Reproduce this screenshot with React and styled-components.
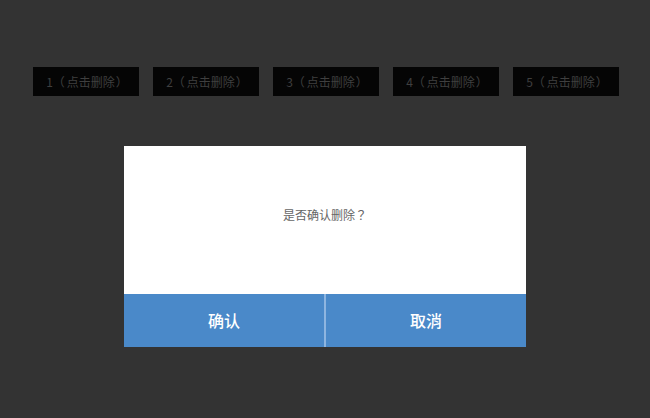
import React from "react";
import styled, { createGlobalStyle } from "styled-components";

const GlobalStyle = createGlobalStyle`
  html, body {
    margin: 0;
    padding: 0;
    background: #333333;
    font-family: "Noto Sans CJK TC", "Noto Sans CJK SC", "Noto Sans", sans-serif;
  }
  #root {
    width: 650px;
    height: 418px;
  }
`;

const Page = styled.div`
  width: 650px;
  height: 418px;
  background: #333333;
  display: flex;
  flex-direction: column;
  overflow: hidden;
`;

const Toolbar = styled.div`
  display: flex;
  gap: 14px;
  padding: 67px 0 0 33px;
`;

const ItemButton = styled.button`
  width: 106px;
  height: 29px;
  border: none;
  margin: 0;
  padding: 0 0 0 2px;
  background: #050505;
  color: #3f3f3f;
  font-family: inherit;
  font-size: 12px;
  line-height: 29px;
  text-align: center;
  cursor: pointer;
`;

const Paren = styled.span`
  margin: ${(p) => (p.$open ? "0 2px 0 0" : "0 0 0 1px")};
`;

const Dialog = styled.div`
  align-self: center;
  margin-top: 50px;
  width: 402px;
  height: 201px;
  background: #ffffff;
  display: flex;
  flex-direction: column;
`;

const Message = styled.div`
  flex: 1;
  display: flex;
  align-items: center;
  justify-content: center;
  padding-bottom: 11px;
  color: #666666;
  font-size: 12px;
`;

const ActionBar = styled.div`
  height: 53px;
  display: flex;
  background: #4a89c9;
`;

const Action = styled.button`
  flex: 1;
  border: none;
  margin: 0;
  padding: 0 0 1px;
  background: #4a89c9;
  color: #ffffff;
  font-family: inherit;
  font-size: 16px;
  font-weight: 500;
  cursor: pointer;
  & + & {
    border-left: 2px solid #8eb5e0;
  }
`;

export default function App() {
  const items = [1, 2, 3, 4, 5];
  return (
    <Page>
      <GlobalStyle />
      <Toolbar>
        {items.map((n) => (
          <ItemButton key={n}>
            {n}
            <Paren $open>（</Paren>点击删除<Paren>）</Paren>
          </ItemButton>
        ))}
      </Toolbar>
      <Dialog>
        <Message>是否确认删除？</Message>
        <ActionBar>
          <Action>确认</Action>
          <Action>取消</Action>
        </ActionBar>
      </Dialog>
    </Page>
  );
}
